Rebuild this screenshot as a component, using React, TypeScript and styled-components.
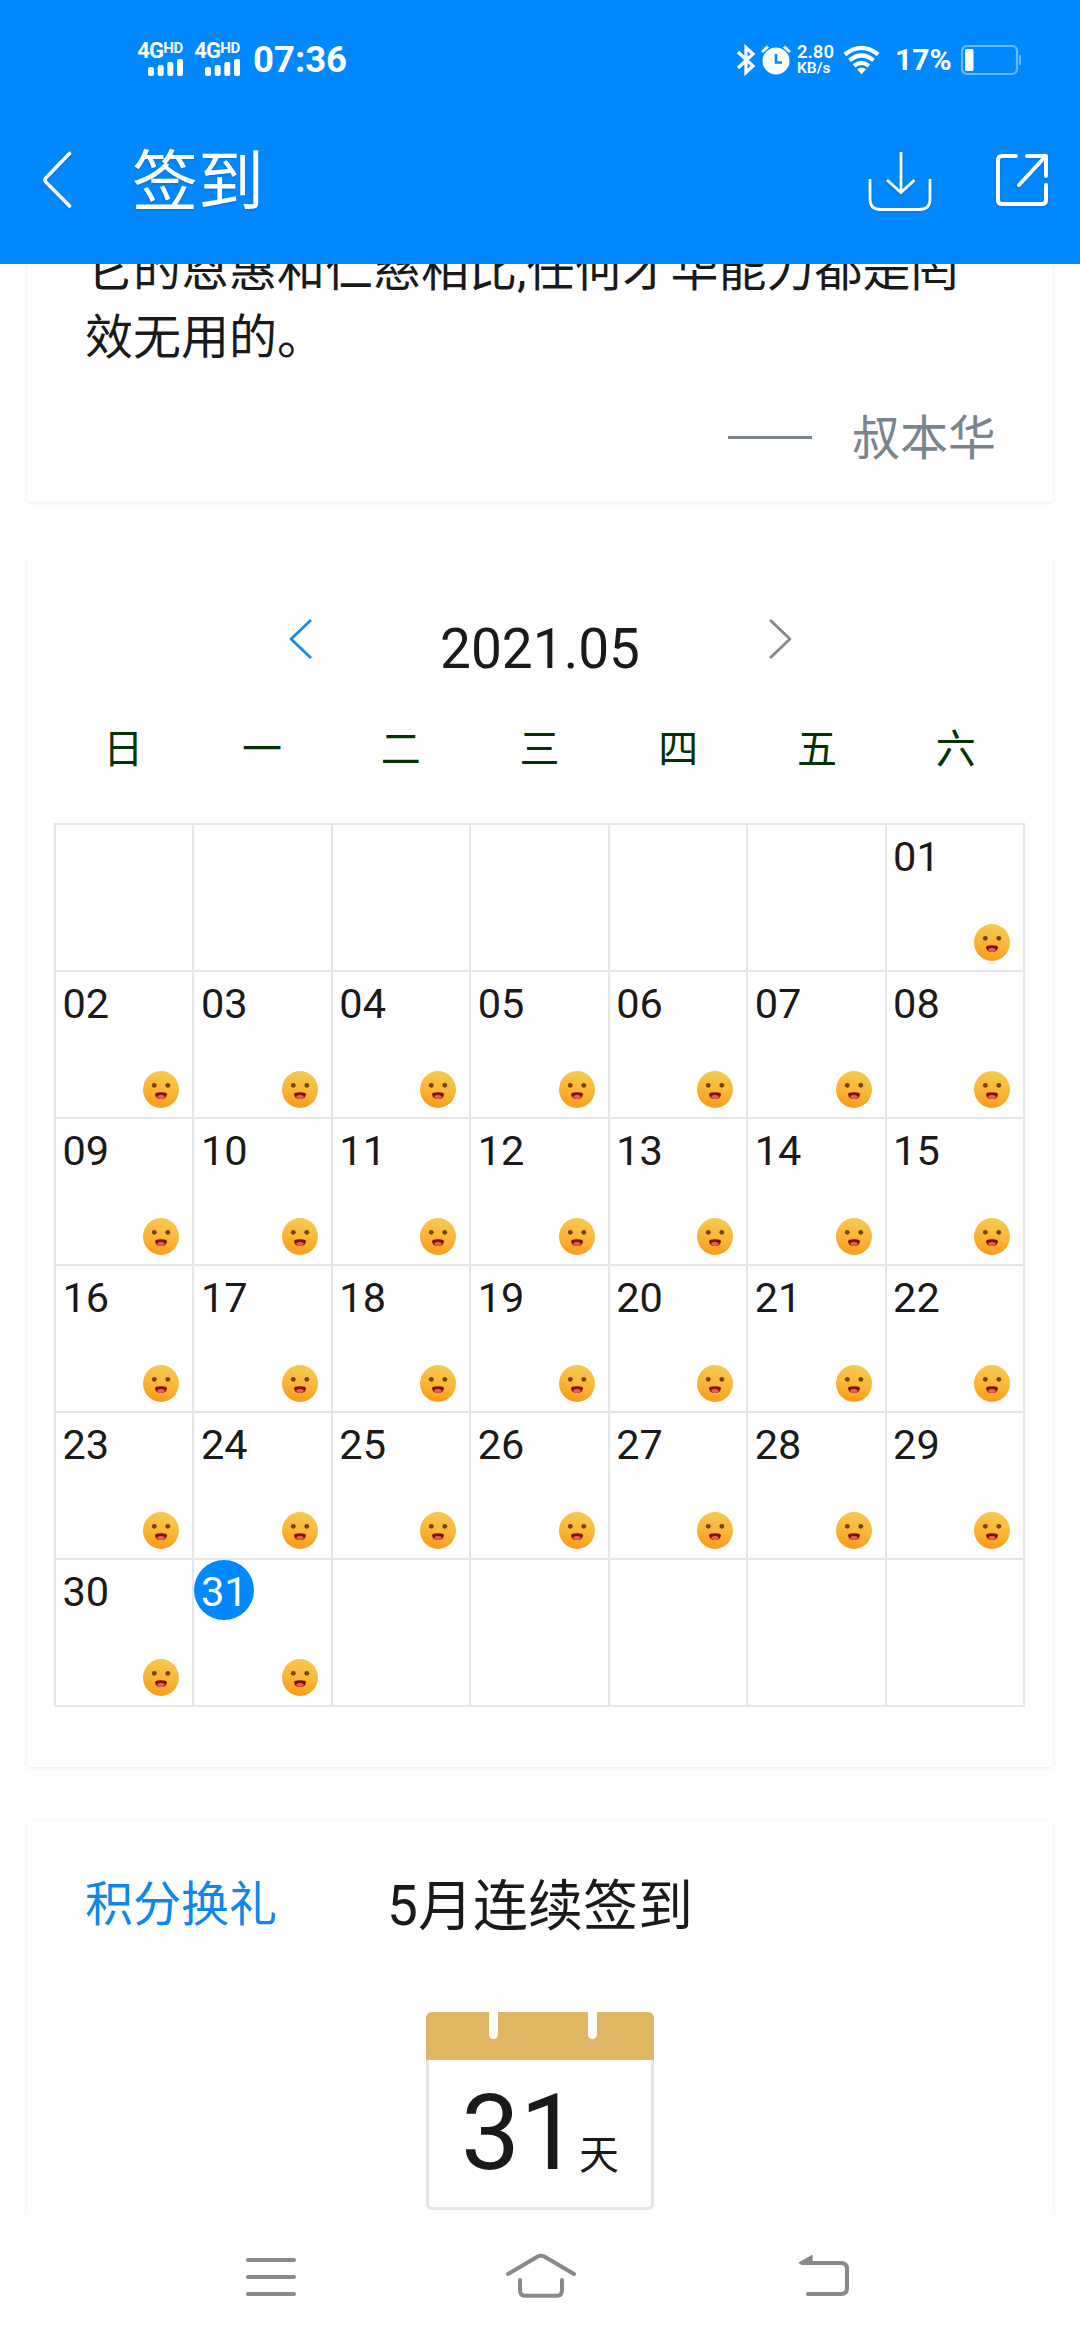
import React from "react";
import styled, { createGlobalStyle } from "styled-components";

const BLUE = "#0088ff";
const INK = "#1a1a1a";

const GlobalStyle = createGlobalStyle`
  *, *::before, *::after { box-sizing: border-box; }
  body { margin: 0; background: #fefefe; }
`;

const Screen = styled.div`
  display: flex;
  flex-direction: column;
  width: 1080px;
  height: 2340px;
  overflow: hidden;
  background: #fefefe;
  color: ${INK};
  font-family: Roboto, "Noto Sans CJK SC", sans-serif;
`;

const Header = styled.header`
  flex: none;
  height: 264px;
  background: ${BLUE};
  color: #fff;
`;

const StatusBar = styled.div`
  display: flex;
  justify-content: space-between;
  align-items: center;
  height: 120px;
  padding: 0 59px 0 135px;
`;

const StatusGroup = styled.div`
  display: flex;
  align-items: center;
`;

const Network = styled.div`
  display: flex;
  flex-direction: column;
  align-items: flex-end;
  width: 48px;
  height: 34px;
  margin: 0 9px 2px 0;
`;

const NetworkLabel = styled.div`
  display: flex;
  align-items: flex-start;
  height: 17px;
  font-size: 22px;
  font-weight: 700;
  line-height: 17px;
  letter-spacing: -0.8px;
`;

const NetworkMark = styled.span`
  font-size: 15px;
  line-height: 12px;
  letter-spacing: -0.3px;
`;

const Clock = styled.span`
  margin-left: 4px;
  font-size: 36.5px;
  font-weight: 700;
  line-height: 40px;
`;

const Speed = styled.div`
  display: flex;
  flex-direction: column;
  width: 46px;
  margin-left: 6px;
  font-size: 18.5px;
  font-weight: 600;
  line-height: 16px;
`;

const SpeedUnit = styled.span`
  font-size: 15.5px;
  line-height: 16px;
`;

const BatteryLevel = styled.span`
  width: 66px;
  margin-left: 15px;
  font-size: 30px;
  font-weight: 700;
  line-height: 34px;
`;

const TitleBar = styled.div`
  display: flex;
  align-items: center;
  height: 120px;
  padding: 0 32px 0 42px;
  filter: drop-shadow(0 1px 1px rgba(0, 40, 110, 0.25));
`;

const Title = styled.h1`
  flex: 1;
  margin: 5px 0 0 58px;
  font-size: 66px;
  font-weight: 400;
  line-height: 90px;
`;

const Actions = styled.div`
  display: flex;
  align-items: center;
  gap: 64px;
`;

const Content = styled.main`
  flex: 1;
  min-height: 0;
  overflow: hidden;
  padding: 0 27px;
`;

const Feed = styled.div`
  display: flex;
  flex-direction: column;
  gap: 54px;
  margin-top: -64px;
`;

const Card = styled.section<{ $height: number }>`
  flex: none;
  display: flex;
  flex-direction: column;
  height: ${(p) => p.$height}px;
  background: #fefefe;
  box-shadow: 0 1px 4px rgba(0, 0, 0, 0.07);
`;

const Quote = styled.p`
  margin: 0;
  padding: 36px 57px 0 58px;
  font-size: 48px;
  line-height: 68px;
`;

const Author = styled.div`
  display: flex;
  justify-content: flex-end;
  align-items: center;
  gap: 40px;
  height: 70px;
  margin-top: 32px;
  padding-right: 57px;
  color: #7a848c;
  font-size: 48px;
  line-height: 70px;
`;

const Rule = styled.span`
  width: 84px;
  height: 3px;
  margin-top: -3px;
  background: currentColor;
`;

const MonthBar = styled.div`
  display: flex;
  justify-content: center;
  align-items: center;
  gap: 126px;
  height: 64px;
  margin-top: 61px;
`;

const Month = styled.span`
  width: 203px;
  margin-top: -1px;
  font-size: 55px;
  line-height: 64px;
  text-align: center;
`;

const ArrowSlot = styled.span`
  display: flex;
  height: 64px;
  padding-top: 1px;
`;

const Weekdays = styled.div`
  display: grid;
  grid-template-columns: repeat(7, 1fr);
  height: 60px;
  margin: 39px 28px 0 27px;
  color: #043204;
  font-size: 40px;
  line-height: 60px;
  text-align: center;
`;

const Grid = styled.div`
  display: grid;
  grid-template-columns: repeat(7, 1fr);
  grid-auto-rows: 147px;
  width: 971px;
  margin: 43px 0 0 27px;
  border: solid #e5e5e5;
  border-width: 2px 0 0 2px;
`;

const Cell = styled.div`
  display: flex;
  flex-direction: column;
  justify-content: space-between;
  border: solid #e5e5e5;
  border-width: 0 2px 2px 0;
`;

const Day = styled.span<{ $today: boolean }>`
  width: 60px;
  height: 60px;
  padding-left: 6.5px;
  border-radius: 50%;
  background: ${(p) => (p.$today ? BLUE : "transparent")};
  color: ${(p) => (p.$today ? "#fff" : INK)};
  font-size: 41.5px;
  line-height: 64px;
`;

const FaceSlot = styled.span`
  display: flex;
  justify-content: flex-end;
  padding: 0 13px 9px 0;
`;

const StreakHead = styled.div`
  display: grid;
  grid-template-columns: 1fr auto 1fr;
  align-items: center;
  height: 80px;
  margin-top: 45px;
  padding: 0 58px;
`;

const GiftLink = styled.a`
  margin-top: -3px;
  color: #0e86ea;
  font-size: 48px;
  line-height: 70px;
`;

const StreakTitle = styled.h2`
  margin: 0;
  font-size: 55px;
  font-weight: 400;
  line-height: 80px;
`;

const TearOff = styled.div`
  align-self: center;
  width: 228px;
  height: 198px;
  margin-top: 66px;
  border: 3px solid #e4e3e6;
  border-top: 0;
  border-radius: 6px;
`;

const TearOffTop = styled.div`
  display: flex;
  justify-content: center;
  gap: 90px;
  height: 48px;
  margin: 0 -3px;
  padding-left: 6px;
  border-radius: 6px 6px 0 0;
  background: #deb664;
`;

const Notch = styled.span`
  width: 9px;
  height: 27px;
  border-radius: 0 0 5px 5px;
  background: #fefefe;
`;

const StreakCount = styled.div`
  display: flex;
  justify-content: center;
  align-items: baseline;
  font-size: 105px;
  line-height: 148px;
`;

const Unit = styled.span`
  font-size: 40px;
  line-height: 40px;
`;

const SystemNav = styled.nav`
  flex: none;
  display: flex;
  height: 127px;
  padding: 38px 229px 0 244px;
  background: #fefefe;
`;

const NavButton = styled.span<{ $before: number }>`
  margin-left: ${(p) => p.$before}px;
`;

const SignalBars = () => (
  <svg width="35" height="17" viewBox="0 0 35 17" fill="#fff">
    <rect x="0" y="8" width="6" height="9" rx="2" />
    <rect x="9.7" y="6" width="6" height="11" rx="2" />
    <rect x="19.3" y="3" width="6" height="14" rx="2" />
    <rect x="29" y="0" width="6" height="17" rx="2" />
  </svg>
);

const Bluetooth = () => (
  <svg width="20" height="32" viewBox="0 0 20 32" fill="none" stroke="#fff" strokeWidth="3.2">
    <path d="M2 8 L17 22 L10 28.5 V3.5 L17 10 L2 24" />
  </svg>
);

const Alarm = () => (
  <svg width="30" height="30" viewBox="0 0 30 30" fill="none" style={{ marginLeft: 5 }}>
    <circle cx="15" cy="16" r="13.5" fill="#fff" />
    <path d="M1 7 L7 1.5 M29 7 L23 1.5" stroke="#fff" strokeWidth="3" />
    <path d="M15 9 V17.5 H21" stroke={BLUE} strokeWidth="2.6" />
  </svg>
);

const Wifi = () => (
  <svg width="37" height="30" viewBox="0 0 37 30" fill="none" stroke="#fff" strokeWidth="4.2">
    <path d="M1.8 9.5 Q18.5 -3.8 35.2 9.5" />
    <path d="M6.5 15.3 Q18.5 5.7 30.5 15.3" />
    <path d="M11 20.8 Q18.5 14.8 26 20.8" />
    <path d="M14 24.2 Q18.5 21 23 24.2 L18.5 29.3 Z" fill="#fff" stroke="none" />
  </svg>
);

const Battery = () => (
  <svg width="60" height="30" viewBox="0 0 60 30" fill="none">
    <rect x="1" y="1" width="55" height="28" rx="5" stroke="#68b9ff" strokeWidth="2.2" />
    <rect x="4" y="4" width="8.5" height="22" rx="1.2" fill="#fff" />
    <path d="M58 10 H59 Q60 10 60 12 V18 Q60 20 59 20 H58 Z" fill="#68b9ff" />
  </svg>
);

const BackChevron = () => (
  <svg width="32" height="58" viewBox="0 0 32 58" fill="none" stroke="#fff" strokeWidth="3.6" strokeLinecap="round" strokeLinejoin="round">
    <path d="M27.5 2.5 L3.8 27 Q2 29 3.8 31 L27.5 55" />
  </svg>
);

const Download = () => (
  <svg width="64" height="62" viewBox="0 0 64 62" fill="none" stroke="#fff" strokeWidth="2.8">
    <path d="M33 3 V43 M19 31 L33 43.5 L46.5 31" />
    <path d="M2 30 V50 Q2 60.5 12.5 60.5 H51.5 Q62 60.5 62 50 V30" />
  </svg>
);

const OpenOut = () => (
  <svg width="52" height="52" viewBox="0 0 52 52" fill="none" stroke="#fff" strokeWidth="4" strokeLinecap="round" strokeLinejoin="round">
    <path d="M20 2 H6 Q2 2 2 6 V46 Q2 50 6 50 H46 Q50 50 50 46 V31" />
    <path d="M31 2 H50 V22 M48 4 L23 31" />
  </svg>
);

const MonthArrow = ({ color, next = false }: { color: string; next?: boolean }) => (
  <ArrowSlot>
    <svg width="24" height="42" viewBox="0 0 24 42" fill="none" stroke={color} strokeWidth="2.8" strokeLinejoin="round">
      <path d={next ? "M2 2 L22 21 L2 40" : "M22 2 L2 21 L22 40"} />
    </svg>
  </ArrowSlot>
);

const Face = () => (
  <svg width="36" height="37" viewBox="0 0 36 37">
    <defs>
      <linearGradient id="face" x1="0.6" y1="0" x2="0.4" y2="1">
        <stop offset="0" stopColor="#f4cb52" />
        <stop offset="0.5" stopColor="#f9b738" />
        <stop offset="1" stopColor="#fc9a1a" />
      </linearGradient>
    </defs>
    <ellipse cx="18" cy="18.5" rx="18" ry="18.4" fill="url(#face)" />
    <circle cx="11.3" cy="14.3" r="2.4" fill="#75400a" />
    <circle cx="24.8" cy="14.3" r="2.4" fill="#75400a" />
    <path d="M12 23.4 Q12 21.2 18 21.2 Q24 21.2 24 23.4 Q23 28 18 28 Q13 28 12 23.4 Z" fill="#7c0d10" />
    <path d="M13.8 25.8 Q18 21.8 22.2 25.8 Q20.5 28 18 28 Q15.5 28 13.8 25.8 Z" fill="#ea5c56" />
  </svg>
);

const MenuGlyph = () => (
  <svg width="54" height="50" viewBox="0 0 54 50" stroke="#898989" strokeWidth="4" strokeLinecap="round">
    <path d="M4 9 H50 M4 26 H50 M4 43 H50" />
  </svg>
);

const HomeGlyph = () => (
  <svg width="74" height="50" viewBox="0 0 74 50" fill="none" stroke="#898989" strokeWidth="4" strokeLinecap="round">
    <path d="M4 23 L32 6.5 Q37 3 42 6.5 L70 23" />
    <path d="M16 29 V39 Q16 44.8 21 44.8 H53 Q58 44.8 58 39 V29" />
  </svg>
);

const ReturnGlyph = () => (
  <svg width="54" height="50" viewBox="0 0 54 50" fill="none" stroke="#898989" strokeWidth="4" strokeLinecap="round">
    <path d="M5 12 H44 Q50 12 50 18 V37 Q50 43 44 43 H11" />
    <path d="M2 12 L15 4.5 V12 Z" fill="#898989" strokeWidth="1.2" strokeLinejoin="round" />
  </svg>
);

const WEEKDAYS = ["日", "一", "二", "三", "四", "五", "六"];
const FIRST_WEEKDAY = 6;
const DAYS_IN_MONTH = 31;
const TODAY = 31;

const cells = Array.from({ length: 42 }, (_, i) => {
  const day = i - FIRST_WEEKDAY + 1;
  return day >= 1 && day <= DAYS_IN_MONTH ? day : null;
});

const NetworkBadge = () => (
  <Network>
    <NetworkLabel>
      4G<NetworkMark>HD</NetworkMark>
    </NetworkLabel>
    <SignalBars />
  </Network>
);

export default function App() {
  return (
    <>
      <GlobalStyle />
      <Screen>
        <Header>
          <StatusBar>
            <StatusGroup>
              <NetworkBadge />
              <NetworkBadge />
              <Clock>07:36</Clock>
            </StatusGroup>
            <StatusGroup>
              <Bluetooth />
              <Alarm />
              <Speed>
                2.80<SpeedUnit>KB/s</SpeedUnit>
              </Speed>
              <Wifi />
              <BatteryLevel>17%</BatteryLevel>
              <Battery />
            </StatusGroup>
          </StatusBar>
          <TitleBar>
            <BackChevron />
            <Title>签到</Title>
            <Actions>
              <Download />
              <OpenOut />
            </Actions>
          </TitleBar>
        </Header>

        <Content>
          <Feed>
            <Card $height={302}>
              <Quote>
                它的恩惠和仁慈相比,任何才华能力都是罔
                <br />
                效无用的。
              </Quote>
              <Author>
                <Rule />
                叔本华
              </Author>
            </Card>

            <Card $height={1211}>
              <MonthBar>
                <MonthArrow color="#1a8ae6" />
                <Month>2021.05</Month>
                <MonthArrow color="#85888c" next />
              </MonthBar>
              <Weekdays>
                {WEEKDAYS.map((name) => (
                  <span key={name}>{name}</span>
                ))}
              </Weekdays>
              <Grid>
                {cells.map((day, i) => (
                  <Cell key={i}>
                    {day !== null && (
                      <>
                        <Day $today={day === TODAY}>{String(day).padStart(2, "0")}</Day>
                        <FaceSlot>
                          <Face />
                        </FaceSlot>
                      </>
                    )}
                  </Cell>
                ))}
              </Grid>
            </Card>

            <Card $height={520}>
              <StreakHead>
                <GiftLink>积分换礼</GiftLink>
                <StreakTitle>5月连续签到</StreakTitle>
              </StreakHead>
              <TearOff>
                <TearOffTop>
                  <Notch />
                  <Notch />
                </TearOffTop>
                <StreakCount>
                  31<Unit>天</Unit>
                </StreakCount>
              </TearOff>
            </Card>
          </Feed>
        </Content>

        <SystemNav>
          <NavButton $before={0}>
            <MenuGlyph />
          </NavButton>
          <NavButton $before={206}>
            <HomeGlyph />
          </NavButton>
          <NavButton $before={219}>
            <ReturnGlyph />
          </NavButton>
        </SystemNav>
      </Screen>
    </>
  );
}
